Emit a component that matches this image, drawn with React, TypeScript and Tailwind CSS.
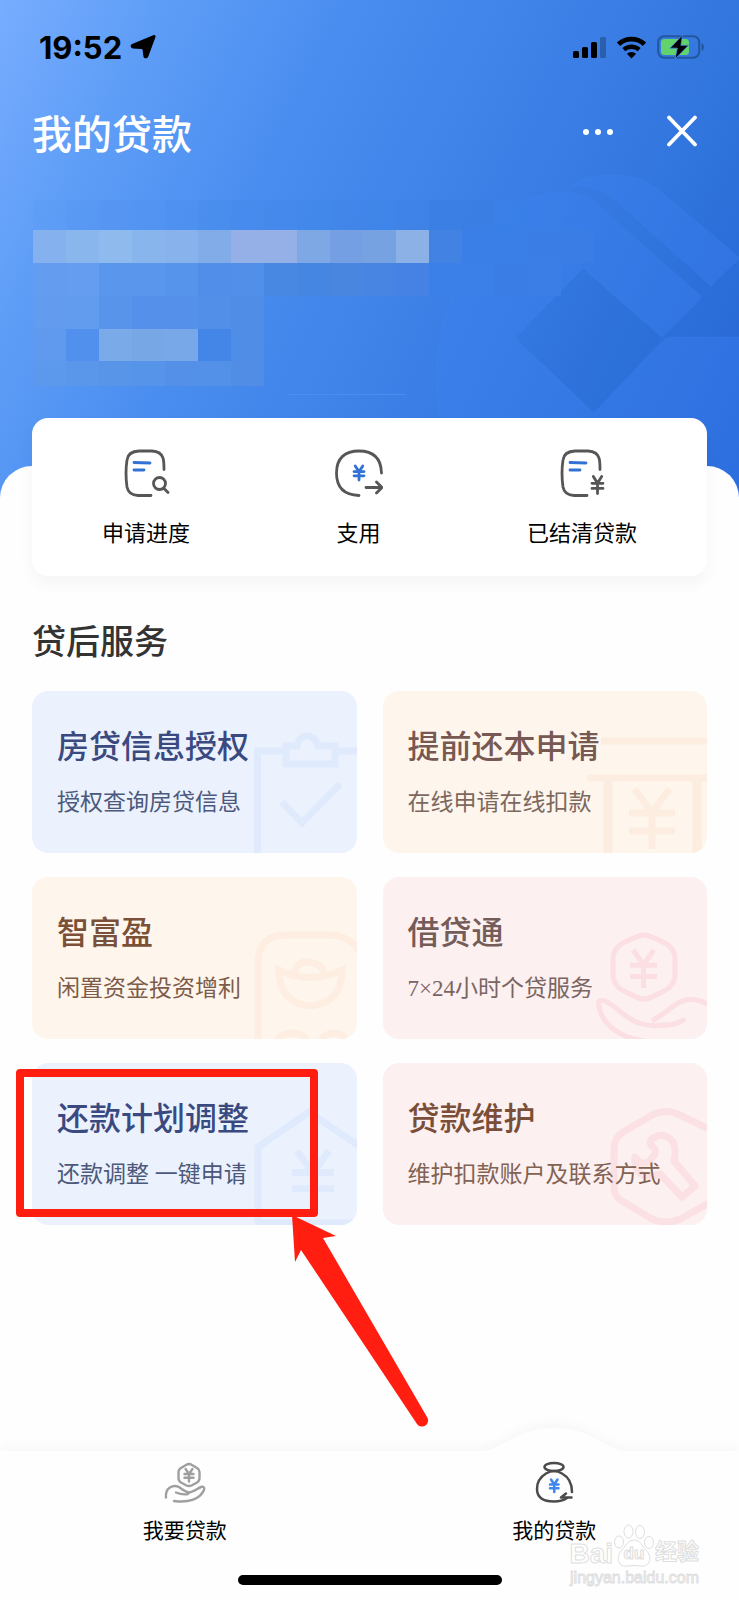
import type { ReactNode } from 'react';

const CJK = "font-['Liberation_Sans','Noto_Sans_CJK_SC',sans-serif]";

/* ---------- shared drawing ---------- */

interface YenProps {
  x: number;
  y: number;
  w: number;
  h: number;
}

function Yen({ x, y, w, h }: YenProps) {
  const mid = x + w / 2;
  const first = y + h * 0.4;
  return (
    <path
      d={`M${x + w * 0.12} ${y}L${mid} ${first}L${x + w * 0.88} ${y}M${x} ${first}H${x + w}M${x} ${y + h * 0.7}H${x + w}M${mid} ${first}V${y + h}`}
    />
  );
}

/* ---------- status bar ---------- */

function StatusBar() {
  return (
    <div className="flex h-[94px] items-center justify-between pl-[39px] pr-[34px] text-black">
      <div className="flex items-center gap-2">
        <span className="font-['Inter',sans-serif] text-[31px] font-bold leading-none">19:52</span>
        <svg className="h-6 w-[26px]" viewBox="0 0 26 24" fill="currentColor" aria-hidden="true">
          <path d="M23.200.2c1.600-.6 2.800.5 2.200 2.100L18.300 21.500c-.9 2.500-4.600 2.500-4.900-.2l-.8-6.300c-.1-.7-.4-1-1.100-1.100l-8.600-.5C.3 13.200-.2 10 2.100 9z" />
        </svg>
      </div>
      <div className="flex items-center gap-[10px]">
        <svg className="h-[23px] w-[33px]" viewBox="0 0 33 23" fill="currentColor" aria-hidden="true">
          <rect x="0" y="15" width="6" height="7" rx="1.5" />
          <rect x="9" y="11" width="6" height="11" rx="1.5" />
          <rect x="18" y="6" width="6" height="16" rx="1.5" />
          <rect x="27" y="1" width="6" height="21" rx="1.5" opacity=".25" />
        </svg>
        <svg className="h-[23px] w-[31px]" viewBox="0 0 31 23" aria-hidden="true">
          <path d="M2.500 8.200a19 19 0 0 1 26 0" fill="none" stroke="currentColor" strokeWidth="4.800" />
          <path d="M7.800 13.700a11.500 11.500 0 0 1 15.400 0" fill="none" stroke="currentColor" strokeWidth="4.300" />
          <path d="M15.500 22.500l-4.600-4.700a6.600 6.600 0 0 1 9.200 0z" fill="currentColor" />
        </svg>
        <svg className="h-6 w-12" viewBox="0 0 48 24" aria-hidden="true">
          <rect x="1.200" y="1.200" width="41" height="21.600" rx="6" fill="none" stroke="#23569d" strokeWidth="2" />
          <path d="M44.500 8c3.200 1 3.200 7 0 8z" fill="#23569d" />
          <rect x="4" y="4" width="28" height="16" rx="3.500" fill="#62d26a" />
          <path d="M25.500 0L13 13.200h7.300L18 24l13.500-13.700h-7.600z" fill="#000" stroke="#4a8be8" strokeWidth=".8" />
        </svg>
      </div>
    </div>
  );
}

/* ---------- header ---------- */

const mosaic: { height: string; cells: string[] }[] = [
  {
    height: 'h-[30px]',
    cells: [
      'bg-[#5a9bf4]/30', 'bg-[#5595f0]/40', 'bg-[#5595f0]/60', 'bg-[#5292f0]/50', 'bg-[#4c90ef]/60', 'bg-[#478bea]/50',
      'bg-[#4489ea]/50', 'bg-[#4287e8]/50', 'bg-[#4086e8]/50', 'bg-[#3f84e7]/50', 'bg-[#3e83e6]/50', 'bg-[#3d82e6]/50',
      'bg-[#3a7ee2]/70', 'bg-[#397de2]/70', 'bg-[#3b80e8]/70', 'bg-[#3b80e8]/70', 'bg-transparent',
    ],
  },
  {
    height: 'h-[33px]',
    cells: [
      'bg-[#85b1ef]', 'bg-[#8ab6ee]', 'bg-[#8ebaee]', 'bg-[#89b5ed]', 'bg-[#88b2ec]', 'bg-[#81ace7]',
      'bg-[#95b0e7]', 'bg-[#95b0e6]', 'bg-[#7da8e4]', 'bg-[#749fe2]', 'bg-[#76a2e2]', 'bg-[#8cb1e6]',
      'bg-[#4282e3]', 'bg-[#3a7fe7]', 'bg-[#3a7fe7]', 'bg-[#3a7ee5]', 'bg-[#397de5]',
    ],
  },
  {
    height: 'h-[33px]',
    cells: [
      'bg-[#649df0]', 'bg-[#659df0]', 'bg-[#5a96eb]', 'bg-[#5a96ec]', 'bg-[#5693ea]', 'bg-[#508eea]',
      'bg-[#518fe8]', 'bg-[#4888e2]', 'bg-[#4586e3]', 'bg-[#4886e0]', 'bg-[#4884e2]', 'bg-[#4582e3]',
      'bg-[#3a80e8]', 'bg-[#3b80e8]', 'bg-[#3a7ee5]', 'bg-[#3a7ee6]', 'bg-transparent',
    ],
  },
  {
    height: 'h-[33px]',
    cells: [
      'bg-[#639cef]', 'bg-[#629cef]', 'bg-[#5894e9]', 'bg-[#5591ea]', 'bg-[#5591ea]', 'bg-[#518fe9]', 'bg-[#508de7]',
    ],
  },
  {
    height: 'h-8',
    cells: [
      'bg-[#609aee]', 'bg-[#5190ec]', 'bg-[#7aaae8]', 'bg-[#77a7e5]', 'bg-[#79a8e8]', 'bg-[#4486e7]', 'bg-[#508de6]',
    ],
  },
  {
    height: 'h-[25px]',
    cells: [
      'bg-[#5c99ec]', 'bg-[#5a97ea]', 'bg-[#5895e9]', 'bg-[#5694e9]', 'bg-[#5490e8]', 'bg-[#5390e8]', 'bg-[#528de5]',
    ],
  },
];

function Mosaic() {
  return (
    <div className="relative mt-7 pl-[33px]" aria-hidden="true">
      {mosaic.map((row, r) => (
        <div key={r} className="flex">
          {row.cells.map((cell, c) => (
            <div key={c} className={`w-[33px] ${row.height} ${cell}`} />
          ))}
        </div>
      ))}
      <div className="ml-[255px] mt-2 h-px w-[118px] bg-[#5595f0]/60" />
    </div>
  );
}

function Emblem() {
  return (
    <svg
      className="absolute right-0 top-[170px] h-[330px] w-[309px]"
      viewBox="430 170 309 330"
      fill="#3d82f2"
      fillOpacity=".38"
      stroke="#5595f5"
      strokeOpacity=".15"
      aria-hidden="true"
    >
      <path d="M571 186C590 172 628 170 654 186L740 258L711 286L615 200C603 189 588 184 571 186Z" />
      <path
        fillRule="evenodd"
        d="M472 500C420 420 416 285 527 200C555 188 583 189 600 207L702 297L662 337L583 268L515 338L594 413L662 342Q666 337 674 337H740V500Z"
      />
      <path d="M583 268L515 338L594 413L661 338Z" fill="#1d5fc9" fillOpacity=".08" stroke="none" />
    </svg>
  );
}

function Header() {
  return (
    <header className="relative overflow-hidden bg-[linear-gradient(116deg,#78adff_0%,#5f9ef7_16%,#498df0_36%,#3b7fe6_62%,#2f73dc_80%,#2564d4_100%)] pb-[103px]">
      <Emblem />
      <StatusBar />
      <div className="relative flex h-[78px] items-center justify-between pl-8 pr-[39px] text-white">
        <h1 className="mt-1 text-[40px] font-medium leading-none">我的贷款</h1>
        <div className="flex items-center gap-[48px]">
          <button type="button" aria-label="更多">
            <svg className="h-8 w-9" viewBox="0 0 36 32" fill="currentColor">
              <circle cx="6" cy="15" r="3" />
              <circle cx="18" cy="15" r="3" />
              <circle cx="30" cy="15" r="3" />
            </svg>
          </button>
          <button type="button" aria-label="关闭">
            <svg className="h-9 w-9" viewBox="0 0 36 36" fill="none" stroke="currentColor" strokeWidth="3.800" strokeLinecap="round">
              <path d="M5 2.500L31 29.500M31 2.500L5 29.500" />
            </svg>
          </button>
        </div>
      </div>
      <Mosaic />
    </header>
  );
}

/* ---------- quick entries ---------- */

const docOutline = 'M42 20.500Q42 12 41 9Q39 2.500 30 2H17Q6 2.500 5 11Q3 24 5 38Q6.500 46 16 46.500H29';

const quickActions: { label: string; icon: ReactNode }[] = [
  {
    label: '申请进度',
    icon: (
      <>
        <path d={docOutline} />
        <path d="M12 13.500L28 14M12 21H22" stroke="#3272d6" />
        <circle cx="37.500" cy="34.500" r="6" />
        <path d="M42 39.500L46 43.500" />
      </>
    ),
  },
  {
    label: '支用',
    icon: (
      <>
        <path d="M46.500 24C46 9 38 2 24 2S1.500 9 1.500 24S9 46 24 46.500" />
        <g stroke="#3272d6">
          <Yen x={19} y={17} w={10} h={14} />
        </g>
        <path d="M31 38.500H46.500M41.500 33L47 38.500L41.500 44" />
      </>
    ),
  },
  {
    label: '已结清贷款',
    icon: (
      <>
        <path d={docOutline} />
        <path d="M12 13.500L28 14M12 21H22" stroke="#3272d6" />
        <Yen x={34} y={27.500} w={11} h={17} />
      </>
    ),
  },
];

function QuickActions() {
  return (
    <nav className="relative mx-8 -mt-[49px] flex justify-between rounded-2xl bg-white px-[70px] pb-[26px] pt-[31px] shadow-[0_8px_16px_rgba(0,0,0,0.04)]">
      {quickActions.map((action) => (
        <button key={action.label} type="button" className="flex flex-col items-center gap-[21px] text-[22px] leading-8 text-black">
          <svg
            className="h-12 w-12"
            viewBox="0 0 48 48"
            fill="none"
            stroke="#565656"
            strokeWidth="2.800"
            strokeLinecap="round"
            strokeLinejoin="round"
            aria-hidden="true"
          >
            {action.icon}
          </svg>
          {action.label}
        </button>
      ))}
    </nav>
  );
}

/* ---------- service cards ---------- */

interface Service {
  title: string;
  desc: string;
  card: string;
  titleColor: string;
  descColor: string;
  artColor: string;
  art: ReactNode;
  marked?: boolean;
}

const services: Service[] = [
  {
    title: '房贷信息授权',
    desc: '授权查询房贷信息',
    card: 'bg-[#ebf2fe]',
    titleColor: 'text-[#3a4a80]',
    descColor: 'text-[#4c597c]',
    artColor: 'text-[#dfeafd]',
    art: (
      <>
        <path d="M12.500 124V20H38M93 20H114" />
        <path d="M41 15H52Q54 5 62 5T73 15H90V33H41Z" />
        <path d="M37 71L57 92L95 53" />
      </>
    ),
  },
  {
    title: '提前还本申请',
    desc: '在线申请在线扣款',
    card: 'bg-[#fef6ec]',
    titleColor: 'text-[#775853]',
    descColor: 'text-[#7d6860]',
    artColor: 'text-[#fdede0]',
    art: (
      <>
        <path d="M6 10H114M-8 47H112" />
        <path d="M13 50V124M102 50V124" strokeWidth="9" />
        <Yen x={34} y={58} w={46} h={60} />
      </>
    ),
  },
  {
    title: '智富盈',
    desc: '闲置资金投资增利',
    card: 'bg-[#fef6ec]',
    titleColor: 'text-[#7a5038]',
    descColor: 'text-[#7d5b48]',
    artColor: 'text-[#fdeee1]',
    art: (
      <>
        <path d="M13 124V46Q13 18 41 18H84Q104 18 114 34" />
        <path d="M34 53Q65 68 97 53Q97 86 65 89Q34 86 34 53ZM49 57Q51 45 62 45Q76 45 80 57" />
        <path d="M32 124Q36 116 47 116T62 124M76 124Q80 116 89 116T102 124" />
      </>
    ),
  },
  {
    title: '借贷通',
    desc: '7×24小时个贷服务',
    card: 'bg-[#fcf0f0]',
    titleColor: 'text-[#745c59]',
    descColor: 'text-[#7a6562]',
    artColor: 'text-[#fbdfe2]',
    art: (
      <g strokeWidth="5">
        <path d="M41 20Q49 16 57 20L70 26Q79 31 80 40V59Q79 68 71 73L57 80Q49 84 41 80L27 73Q19 68 18 59V40Q19 31 28 26Z" />
        <Yen x={35} y={33} w={27} h={38} />
        <path d="M50 124C22 121 7 105 4 90Q2 81 10 84C22 90 31 102 44 106Q56 110 66 108Q80 109 90 102M57 104Q70 96 80 88Q96 77 114 88" />
      </g>
    ),
  },
  {
    title: '还款计划调整',
    desc: '还款调整 一键申请',
    card: 'bg-[#ebf2fe]',
    titleColor: 'text-[#3a4a80]',
    descColor: 'text-[#4c597c]',
    artColor: 'text-[#dfeafd]',
    marked: true,
    art: (
      <>
        <path d="M13 120V44L64 9L114 43M10 120H114" />
        <Yen x={47} y={48} w={42} h={54} />
      </>
    ),
  },
  {
    title: '贷款维护',
    desc: '维护扣款账户及联系方式',
    card: 'bg-[#fcf0f0]',
    titleColor: 'text-[#7a4e38]',
    descColor: 'text-[#826252]',
    artColor: 'text-[#fbe1e3]',
    art: (
      <>
        <path d="M114 26L85 12Q71 5 57 12L28 29Q19 35 19 46V84Q19 93 27 98L57 116Q71 122 85 116L114 100" />
        <path
          strokeLinejoin="round"
          d="M40 54Q50 66 57 55Q64 48 57 43Q52 38 60 34Q70 29 78 39Q82 47 79 58L100 83L87 94L65 71Q50 77 43 68Q39 62 40 54Z"
        />
      </>
    ),
  },
];

// Red frame and pointer drawn over the highlighted card
function Marker() {
  return (
    <>
      <div className="pointer-events-none absolute -left-4 right-[39px] top-[6px] h-[148px] rounded-[4px] border-8 border-[#ff1e10]" />
      <svg
        className="pointer-events-none absolute right-[-72px] top-[150px] z-10 h-[216px] w-[140px]"
        viewBox="0 0 140 216"
        fill="#ff1e10"
        aria-hidden="true"
      >
        <path d="M3 2L47 23L34 25L138 204A5.800 5.800 0 0 1 128 211L12 37L6 49Z" />
      </svg>
    </>
  );
}

function ServiceCard({ service }: { service: Service }) {
  return (
    <li className="relative">
      <a href="#" className={`relative block overflow-hidden rounded-2xl px-[25px] pb-[34px] pt-9 ${service.card}`}>
        <svg
          className={`absolute bottom-0 right-0 h-[122px] w-[124px] ${service.artColor}`}
          viewBox="-12 0 124 122"
          fill="none"
          stroke="currentColor"
          strokeWidth="7"
          aria-hidden="true"
        >
          {service.art}
        </svg>
        <h3 className={`relative text-[32px] font-medium leading-10 ${service.titleColor}`}>{service.title}</h3>
        <p
          className={`relative mt-5 whitespace-nowrap font-['Liberation_Serif','Noto_Sans_CJK_SC',sans-serif] text-[23px] leading-8 ${service.descColor}`}
        >
          {service.desc}
        </p>
      </a>
      {service.marked && <Marker />}
    </li>
  );
}

/* ---------- bottom tabs ---------- */

function TabBar() {
  return (
    <footer className="relative mt-auto bg-[#fefefe] shadow-[0_-6px_10px_rgba(0,0,0,0.025)]">
      <div className="grid grid-cols-2 text-[21px] leading-6 text-black">
        <a href="#" className="flex flex-col items-center gap-3.5 pt-2.5">
          <svg
            className="h-11 w-11"
            viewBox="0 0 44 44"
            fill="none"
            stroke="#9f9f9f"
            strokeWidth="2.400"
            strokeLinecap="round"
            strokeLinejoin="round"
            aria-hidden="true"
          >
            <path d="M23 4Q26 2 29 4L34 7Q36.500 8.500 36.500 11V17Q36.500 20 34 21.500L29 24.300Q26 25.800 23 24.300L18 21.500Q15.500 20 15.500 17V11Q15.500 8.500 18 7Z" />
            <Yen x={21.500} y={8} w={9} h={12.500} />
            <path d="M3 36.500C2 27 10 23 16 26C20 29 22 31 26 31.500C26 34 19 34 13 31.500M26 31.500C31 31 35 27 38 26Q42 25 41 29C37 38 26 42 11 40" />
          </svg>
          我要贷款
        </a>
        <a href="#" aria-current="page" className="relative flex flex-col items-center gap-3.5 pt-2.5">
          <svg
            className="absolute -top-[23px] left-1/2 h-6 w-[150px] -translate-x-1/2 drop-shadow-[0_-5px_4px_rgba(0,0,0,0.025)]"
            viewBox="0 0 150 24"
            fill="#fefefe"
            aria-hidden="true"
          >
            <path d="M0 24C25 22 36 0 75 0S125 22 150 24Z" />
          </svg>
          <svg
            className="relative h-11 w-11"
            viewBox="0 0 44 44"
            fill="none"
            stroke="#4b4b4b"
            strokeWidth="2.500"
            strokeLinecap="round"
            strokeLinejoin="round"
            aria-hidden="true"
          >
            <ellipse cx="22" cy="6" rx="9.500" ry="4" />
            <path d="M40 31Q40 18 30 12.500Q26 10 22 10T14 12.500Q5 18 5 28Q5 40.500 22 40.500Q30 40.500 35 37" />
            <path d="M39.500 36.500H29L34 32.500" />
            <g stroke="#3f86ee">
              <Yen x={18} y={18.500} w={8.500} h={12.500} />
            </g>
          </svg>
          <span className="relative">我的贷款</span>
        </a>
      </div>
      <div className="mx-auto mb-[15px] mt-8 h-2.5 w-[264px] rounded-full bg-black" />
      <Watermark />
    </footer>
  );
}

function Watermark() {
  return (
    <div className="pointer-events-none absolute bottom-3 right-[40px] flex flex-col items-end text-white [-webkit-text-stroke:1px_#dedede]">
      <div className="flex items-end">
        <span className="mb-0.5 font-['Liberation_Sans',sans-serif] text-[28px] font-bold leading-6">Bai</span>
        <div className="relative h-11 w-[42px]">
          <svg className="h-11 w-[42px]" viewBox="0 0 40 44" fill="#fff" stroke="#dedede" aria-hidden="true">
            <ellipse cx="5" cy="18" rx="4.500" ry="6" />
            <ellipse cx="14.500" cy="7.500" rx="4.500" ry="6.500" />
            <ellipse cx="26" cy="8" rx="4.500" ry="6.500" />
            <ellipse cx="35" cy="18.500" rx="4.500" ry="6" />
            <path d="M20 16C26 16 28 22 32 26C38 32 37 43 27 42Q20 41 13 42C3 43 2 32 8 26C12 22 14 16 20 16Z" />
          </svg>
          <span className="absolute inset-x-0 bottom-1 text-center font-['Liberation_Sans',sans-serif] text-[17px] font-bold leading-5">
            du
          </span>
        </div>
        <span className="text-[22px] font-bold leading-8">经验</span>
      </div>
      <span className="font-['Liberation_Sans',sans-serif] text-[16px] leading-5">jingyan.baidu.com</span>
    </div>
  );
}

export default function App() {
  return (
    <div lang="zh-CN" className={`flex min-h-screen flex-col bg-[#fefefe] ${CJK}`}>
      <Header />
      <main className="relative -mt-8 rounded-t-[32px] bg-[#fefefe] pt-px">
        <QuickActions />
        <section className="px-8">
          <h2 className="mt-[42px] text-[34px] font-medium leading-12 text-[#333]">贷后服务</h2>
          <ul className="mt-[25px] grid grid-cols-2 gap-x-[26px] gap-y-6">
            {services.map((service) => (
              <ServiceCard key={service.title} service={service} />
            ))}
          </ul>
        </section>
      </main>
      <TabBar />
    </div>
  );
}
